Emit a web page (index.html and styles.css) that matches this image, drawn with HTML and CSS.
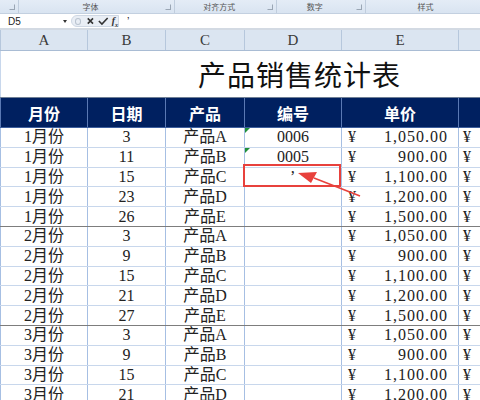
FILE: index.html
```html
<!DOCTYPE html>
<html lang="zh-CN">
<head>
    <meta charset="UTF-8">
    <title>产品销售统计表</title>
    <link rel="stylesheet" href="styles.css">
</head>
<body>
    <div class="ribbon">
        <div class="group g0"><span class="launcher"></span></div>
        <div class="group g1"><span class="label">字体</span><span class="launcher"></span></div>
        <div class="group g2"><span class="label">对齐方式</span><span class="launcher"></span></div>
        <div class="group g3"><span class="label">数字</span><span class="launcher"></span></div>
        <div class="group g4"><span class="label">样式</span></div>
    </div>
    <div class="formula-bar">
        <div class="name-box">D5<span class="drop"></span></div>
        <div class="fx-tools">
            <span class="dot"></span>
            <svg width="10" height="10" viewBox="0 0 10 10"><path d="M2 2 L8 8 M8 2 L2 8" stroke="#333" stroke-width="1.8"/></svg>
            <svg width="12" height="10" viewBox="0 0 12 10"><path d="M1 5 L4.5 8.5 L11 1.5" stroke="#333" stroke-width="1.8" fill="none"/></svg>
            <span class="fx">f<sub>x</sub></span>
        </div>
        <div class="formula">’</div>
    </div>

    <div class="sheet">
        <table class="grid">
            <colgroup>
                <col style="width:87px"><col style="width:78px"><col style="width:79px">
                <col style="width:97px"><col style="width:117px"><col style="width:60px">
            </colgroup>
            <tr class="colhead">
                <td>A</td><td>B</td><td>C</td><td>D</td><td>E</td><td></td>
            </tr>
            <tr class="title-row">
                <td colspan="6">产品销售统计表</td>
            </tr>
            <tr class="head">
                <td>月份</td><td>日期</td><td>产品</td><td>编号</td><td>单价</td><td></td>
            </tr>
            <tr><td>1月份</td><td>3</td><td>产品A</td><td class="txt">0006</td><td class="price"><span>¥</span>1,050.00</td><td class="yen">¥</td></tr>
            <tr><td>1月份</td><td>11</td><td>产品B</td><td class="txt">0005</td><td class="price"><span>¥</span>900.00</td><td class="yen">¥</td></tr>
            <tr><td>1月份</td><td>15</td><td>产品C</td><td class="quote">’</td><td class="price"><span>¥</span>1,100.00</td><td class="yen">¥</td></tr>
            <tr><td>1月份</td><td>23</td><td>产品D</td><td></td><td class="price"><span>¥</span>1,200.00</td><td class="yen">¥</td></tr>
            <tr class="end"><td>1月份</td><td>26</td><td>产品E</td><td></td><td class="price"><span>¥</span>1,500.00</td><td class="yen">¥</td></tr>
            <tr><td>2月份</td><td>3</td><td>产品A</td><td></td><td class="price"><span>¥</span>1,050.00</td><td class="yen">¥</td></tr>
            <tr><td>2月份</td><td>9</td><td>产品B</td><td></td><td class="price"><span>¥</span>900.00</td><td class="yen">¥</td></tr>
            <tr><td>2月份</td><td>15</td><td>产品C</td><td></td><td class="price"><span>¥</span>1,100.00</td><td class="yen">¥</td></tr>
            <tr><td>2月份</td><td>21</td><td>产品D</td><td></td><td class="price"><span>¥</span>1,200.00</td><td class="yen">¥</td></tr>
            <tr class="end"><td>2月份</td><td>27</td><td>产品E</td><td></td><td class="price"><span>¥</span>1,500.00</td><td class="yen">¥</td></tr>
            <tr><td>3月份</td><td>3</td><td>产品A</td><td></td><td class="price"><span>¥</span>1,050.00</td><td class="yen">¥</td></tr>
            <tr><td>3月份</td><td>9</td><td>产品B</td><td></td><td class="price"><span>¥</span>900.00</td><td class="yen">¥</td></tr>
            <tr><td>3月份</td><td>15</td><td>产品C</td><td></td><td class="price"><span>¥</span>1,100.00</td><td class="yen">¥</td></tr>
            <tr><td>3月份</td><td>21</td><td>产品D</td><td></td><td class="price"><span>¥</span>1,200.00</td><td class="yen">¥</td></tr>
        </table>

        <!-- annotation drawn over the sheet -->
        <div class="mark-box"></div>
        <svg class="mark-arrow" width="80" height="40" viewBox="0 0 80 40">
            <path d="M62 26 L16 8" stroke="#e8413c" stroke-width="1.6"/>
            <path d="M0 3 L19 2 L13 13 Z" fill="#e8413c"/>
        </svg>
    </div>
</body>
</html>
```

FILE: styles.css
```css
body {
    margin: 0;
    width: 480px;
    height: 400px;
    overflow: hidden;
    background: #fff;
    font-family: "Liberation Serif", "Noto Sans CJK SC", serif;
    color: #222;
}

/* ribbon group labels */
.ribbon {
    display: flex;
    height: 13px;
    background: linear-gradient(#e4ecf6, #d9e4f1);
    border-bottom: 1px solid #c3d0e0;
    font-family: "Noto Sans CJK SC", sans-serif;
    font-size: 8px;
    color: #555;
}
.group {
    position: relative;
    display: flex;
    align-items: center;
    border-right: 1px solid #c0cddd;
    box-sizing: border-box;
}
.g0 { width: 20px; }
.g1 { width: 163px; }
.g2 { width: 107px; }
.g3 { width: 93px; }
.g4 { width: 120px; border-right: none; }
.label {
    flex: 1;
    text-align: center;
    line-height: 13px;
    padding-right: 12px;
}
.g4 .label { padding-right: 0; text-align: left; margin-left: 52px; }
.launcher {
    position: absolute;
    right: 3px;
    top: 4px;
    width: 4px;
    height: 4px;
    border: 1px solid #9aa6b4;
    border-top-color: transparent;
    border-left-color: transparent;
}

/* formula bar */
.formula-bar {
    display: flex;
    align-items: center;
    height: 14px;
    background: #fff;
    border-bottom: 2px solid #d3dae3;
    font-family: "Liberation Sans", sans-serif;
    font-size: 10px;
    color: #222;
}
.name-box {
    position: relative;
    width: 71px;
    padding-left: 8px;
    box-sizing: border-box;
}
.drop {
    position: absolute;
    left: 63px;
    top: 4px;
    border-left: 2.5px solid transparent;
    border-right: 2.5px solid transparent;
    border-top: 3px solid #333;
}
.fx-tools {
    display: flex;
    align-items: center;
    gap: 3px;
    height: 12px;
    width: 48px;
    padding-left: 3px;
    box-sizing: border-box;
    background: #e9eef5;
    border: 1px solid #cfd8e4;
    border-radius: 7px 0 0 7px;
}
.dot {
    width: 5px;
    height: 5px;
    border: 1px solid #b9c3cf;
    border-radius: 50%;
    margin-right: 2px;
}
.fx {
    font-family: "Liberation Serif", serif;
    font-style: italic;
    font-weight: bold;
    font-size: 10px;
    color: #333;
}
.fx sub { font-size: 6px; }
.formula {
    padding-left: 8px;
    font-size: 11px;
}

/* sheet */
.sheet {
    position: relative;
}
.grid {
    table-layout: fixed;
    border-collapse: collapse;
    width: 518px;
}
.grid tr {
    height: 19.8px;
}
.grid td {
    position: relative;
    height: 18px;
    padding: 0;
    text-align: center;
    font-size: 16px;
    line-height: 16px;
    white-space: nowrap;
    overflow: hidden;
    border-left: 1px solid #a6bfe3;
    border-right: 1px solid #a6bfe3;
    border-bottom: 1px solid #c8d7ec;
}
.grid tr.end td {
    border-bottom: 1px solid #7d7d7d;
}
.grid .colhead td {
    height: 20px;
    background: #dbe5f1;
    color: #3a3a3a;
    font-size: 15px;
    border-left: 1px solid #b6c7dc;
    border-right: 1px solid #b6c7dc;
    border-bottom: 1px solid #a9bcd4;
}
.grid .title-row td {
    height: 46px;
    text-align: left;
    padding-left: 197px;
    font-family: "Noto Sans CJK SC", sans-serif;
    font-size: 28px;
    line-height: 32px;
    letter-spacing: 1px;
    color: #111;
    border-left: 1px solid #c8d7ec;
    border-bottom: 1px solid #6f7f95;
}
.grid .head td {
    height: 29px;
    background: #002060;
    color: #fff;
    font-family: "Noto Sans CJK SC", sans-serif;
    font-weight: 700;
    font-size: 16px;
    border-left: 1px solid #5a79b4;
    border-right: 1px solid #5a79b4;
    border-bottom: 1px solid #3d5f9e;
}
.grid td.txt::before {
    content: "";
    position: absolute;
    left: 0;
    top: 0;
    border-top: 5px solid #1f8f3a;
    border-right: 5px solid transparent;
}
.grid td.quote {
    text-align: left;
    padding-left: 45px;
}
.grid td.price {
    text-align: right;
    padding-right: 10px;
    letter-spacing: 1px;
}
.grid td.price span {
    float: left;
    padding-left: 6px;
    letter-spacing: 0;
}
.grid td.yen {
    text-align: left;
    padding-left: 4px;
}

/* red annotation */
.mark-box {
    position: absolute;
    left: 243px;
    top: 134px;
    width: 94px;
    height: 19px;
    border: 2px solid #e8413c;
}
.mark-arrow {
    position: absolute;
    left: 298px;
    top: 140px;
}
```
